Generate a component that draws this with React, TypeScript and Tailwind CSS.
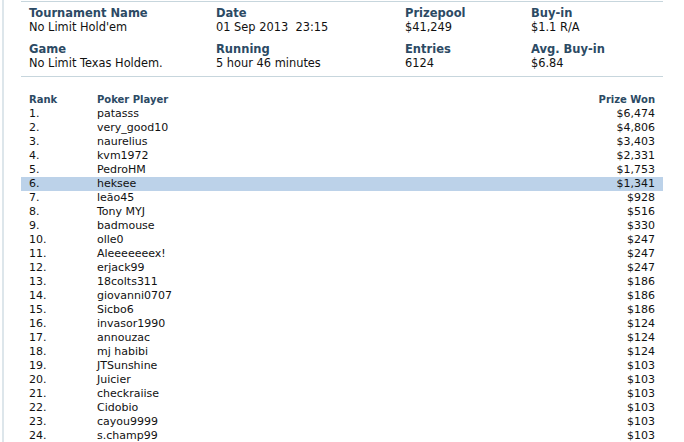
const info = [
  [
    { label: "Tournament Name", value: "No Limit Hold'em" },
    { label: "Date", value: "01 Sep 2013\u00a0\u00a023:15" },
    { label: "Prizepool", value: "$41,249" },
    { label: "Buy-in", value: "$1.1 R/A" },
  ],
  [
    { label: "Game", value: "No Limit Texas Holdem." },
    { label: "Running", value: "5 hour 46 minutes" },
    { label: "Entries", value: "6124" },
    { label: "Avg. Buy-in", value: "$6.84" },
  ],
];

const results: [string, string][] = [
  ["patasss", "$6,474"],
  ["very_good10", "$4,806"],
  ["naurelius", "$3,403"],
  ["kvm1972", "$2,331"],
  ["PedroHM", "$1,753"],
  ["heksee", "$1,341"],
  ["leão45", "$928"],
  ["Tony MYJ", "$516"],
  ["badmouse", "$330"],
  ["olle0", "$247"],
  ["Aleeeeeeex!", "$247"],
  ["erjack99", "$247"],
  ["18colts311", "$186"],
  ["giovanni0707", "$186"],
  ["Sicbo6", "$186"],
  ["invasor1990", "$124"],
  ["annouzac", "$124"],
  ["mj habibi", "$124"],
  ["JTSunshine", "$103"],
  ["Juicier", "$103"],
  ["checkraiise", "$103"],
  ["Cidobio", "$103"],
  ["cayou9999", "$103"],
  ["s.champ99", "$103"],
];

export default function App() {
  return (
    <div className="flex h-[442px] w-[684px] overflow-hidden bg-white font-['DejaVu_Sans',sans-serif] text-[11px] leading-[14px] text-[#111]">
      <div className="ml-[2px] h-full w-[2px] bg-[#dde6eb]" />

      <div className="ml-[17px] w-[642px]">
        <div className="mt-[1px] border-t border-[#c7d6dd]" />

        <div className="flex flex-col gap-[8px] border-b border-[#c7d6dd] pb-[6px] pl-[8px] pt-[4px]">
          {info.map((row, i) => (
            <div key={i} className="grid grid-cols-[187px_189px_126px_1fr]">
              {row.map((cell) => (
                <div key={cell.label} className="flex flex-col">
                  <span className="text-[11.5px] font-bold text-[#2c4a64]">{cell.label}</span>
                  <span className="text-[11.4px]">{cell.value}</span>
                </div>
              ))}
            </div>
          ))}
        </div>

        <div className="mt-[16px]">
          <div className="flex h-[14px] items-center px-[8px] text-[10px] font-bold text-[#2c4a64]">
            <span className="w-[68px]">Rank</span>
            <span className="flex-1">Poker Player</span>
            <span>Prize Won</span>
          </div>
          {results.map(([name, prize], i) => (
            <div
              key={i}
              className={`flex h-[14px] items-center px-[8px] ${i === 5 ? "bg-[#bcd2e9]" : ""}`}
            >
              <span className="w-[68px]">{i + 1}.</span>
              <span className="flex-1">{name}</span>
              <span>{prize}</span>
            </div>
          ))}
        </div>
      </div>
    </div>
  );
}
